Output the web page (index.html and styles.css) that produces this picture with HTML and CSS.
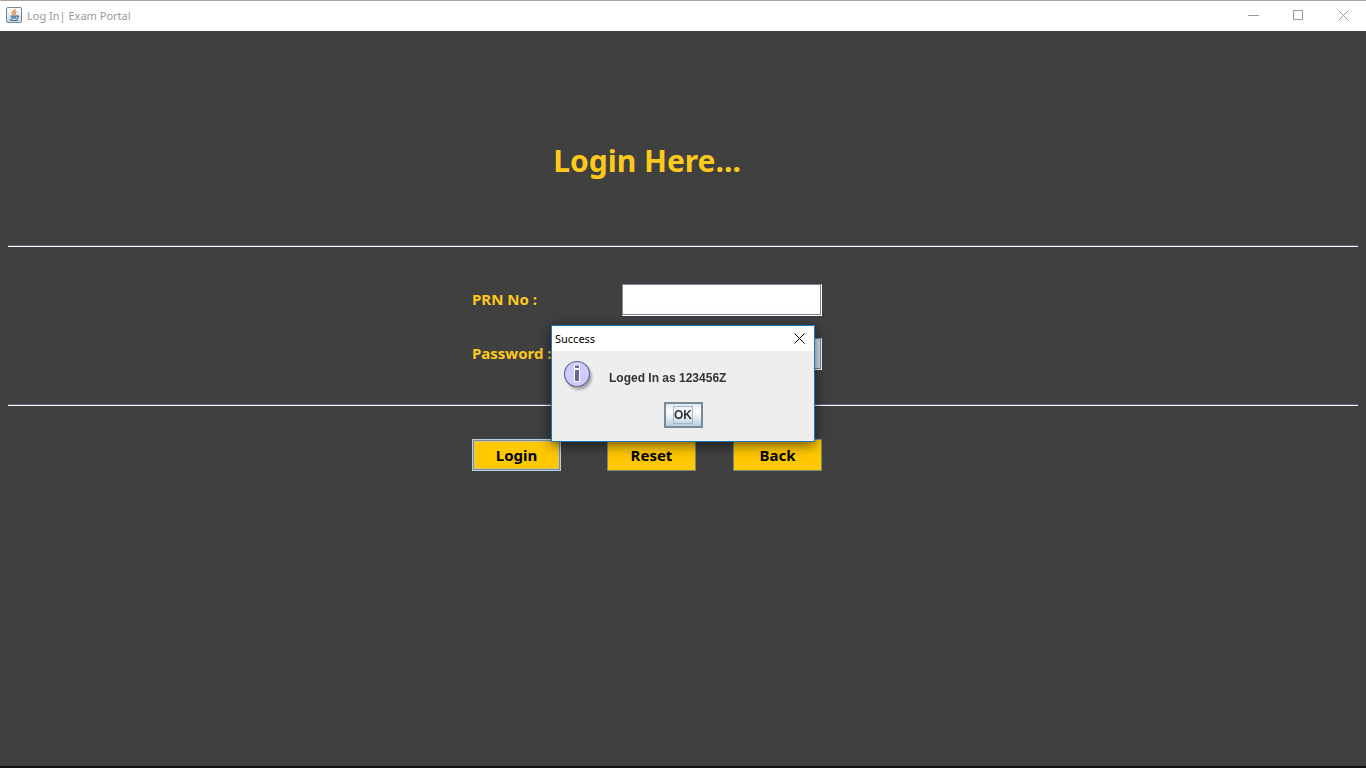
FILE: index.html
```
<!DOCTYPE html>
<html lang="en">
<head>
<meta charset="utf-8">
<title>Log In| Exam Portal</title>
<link rel="stylesheet" href="styles.css">
</head>
<body>
<div class="window">
  <header class="titlebar">
    <svg class="app-icon" width="16" height="16" viewBox="0 0 16 16" aria-hidden="true">
      <defs><linearGradient id="tile" x1="0" y1="0" x2="0" y2="1"><stop offset="0" stop-color="#fff"/><stop offset="1" stop-color="#ccd8e2"/></linearGradient></defs>
      <rect x=".5" y=".5" width="15" height="15" rx="1.5" fill="url(#tile)" stroke="#71899e"/>
      <path d="M9 2C9.500 4 5.200 4.800 6.500 6.500L7.500 8M10.500 4.500C7.500 5.500 9.800 6.500 8.300 8" fill="none" stroke="#e08a30" stroke-width="1.500"/>
      <path d="M4.500 9.200H10.500M5 10.800H10M10.500 9C13.500 8.500 12.500 11 10.500 11.300M3.500 12.500C5 13.800 10 13.800 12 12.700" fill="none" stroke="#3f6a8c" stroke-width="1.200"/>
    </svg>
    <span class="caption">Log In| Exam Portal</span>
    <div class="controls">
      <button class="control" aria-label="Minimize"><svg width="11" height="11" viewBox="0 0 11 11"><path d="M0 5.500H11"/></svg></button>
      <button class="control" aria-label="Maximize"><svg width="11" height="11" viewBox="0 0 11 11"><path d="M.5.5h9v9H.5z"/></svg></button>
      <button class="control" aria-label="Close"><svg width="11" height="11" viewBox="0 0 11 11"><path d="M.5.5l10 10M10.500.5l-10 10"/></svg></button>
    </div>
  </header>
  <main class="portal">
    <h1 class="heading">Login Here...</h1>
    <form class="login">
      <div class="fields">
        <div class="row"><label for="prn">PRN No :</label><input class="field" id="prn" type="text"></div>
        <div class="row"><label for="password">Password :</label><input class="field selected" id="password" type="password"></div>
      </div>
      <div class="actions">
        <button class="action focused" type="button">Login</button>
        <button class="action" type="button">Reset</button>
        <button class="action" type="button">Back</button>
      </div>
    </form>
  </main>
  <footer class="edge"></footer>
</div>
<div class="overlay">
  <section class="dialog" role="dialog" aria-labelledby="dialog-title">
    <header class="dialog-bar">
      <span id="dialog-title">Success</span>
      <button class="dialog-close" aria-label="Close"><svg width="11" height="11" viewBox="0 0 11 11"><path d="M.5.5l10 10M10.500.5l-10 10"/></svg></button>
    </header>
    <div class="dialog-body">
      <div class="message">
        <svg class="info" width="32" height="32" viewBox="0 0 32 32" aria-hidden="true">
          <defs><filter id="soft"><feGaussianBlur stdDeviation="1.200"/></filter></defs>
          <circle cx="16" cy="17" r="13" fill="#aaa" filter="url(#soft)"/>
          <circle cx="14" cy="14" r="12.500" fill="#ccccff" stroke="#666699" stroke-width="1.200"/>
          <path d="M11 4.500h6v4.500h-6zM11 8.500h6v13.500h-6z" fill="#fff"/>
          <path d="M12 5.500h4V8h-4zM12 10h4v11h-4z" fill="#666699"/>
        </svg>
        <p>Loged In as 123456Z</p>
      </div>
      <button class="ok"><span>OK</span></button>
    </div>
  </section>
</div>
</body>
</html>
```
FILE: styles.css
```
* { box-sizing: border-box; }
body { margin: 0; background: #404040; }
button { padding: 0; border: 0; border-radius: 0; background: none; }

.window { display: flex; flex-direction: column; min-height: 100vh; }
.titlebar {
  display: flex; align-items: center; height: 31px; padding-left: 6px;
  border-top: 1px solid #a5a5a5; background: #fff; color: #999;
  font: 11px/16px "Noto Sans", sans-serif;
}
.app-icon { margin-bottom: 2px; }
.caption { margin-left: 5px; }
.controls { display: flex; margin-left: auto; }
.control { display: grid; place-items: center; width: 45px; height: 29px; padding-bottom: 2px; }
.control svg { fill: none; stroke: #999; }

.portal { flex: 1; padding: 0 8px; color: #ffc91c; }
.heading {
  margin: 0; padding: 110px 72px 0 0; height: 214px; text-align: center;
  font: bold 30px/40px "Noto Sans", sans-serif;
}
.login { font: bold 15px/20px "Noto Sans", sans-serif; }
.fields {
  display: flex; flex-direction: column; align-items: center; gap: 22px;
  height: 161px; padding: 38px 72px 0 0;
  border-top: 1px solid #596580; border-bottom: 1px solid #fff;
  box-shadow: inset 0 1px #fff, inset 0 -1px #596580;
}
.row { display: flex; align-items: center; justify-content: space-between; width: 350px; height: 32px; }
.row label { padding-bottom: 2px; }
.field {
  width: 200px; height: 32px; padding: 2px 4px; font: inherit;
  border: 1px solid #fff; border-top-color: #7a8a99; border-left-color: #7a8a99;
  background: #fff; box-shadow: inset -1px -1px #7a8a99; outline: 0;
}
.field.selected { background: #d8e3ec; }
.actions { display: flex; justify-content: center; gap: 37px; padding: 33px 72px 0 0; }
.action {
  width: 89px; height: 32px; border: 1px solid #7a8a70;
  background: #ffc800; color: #000; font: inherit;
}
.action.focused { margin-right: 9px; border-color: #b8cfe5; box-shadow: inset 0 0 0 1px #7a8a99, inset 0 0 0 2px #d8c77a; }
.edge { height: 2px; background: #151515; }

.overlay { position: fixed; inset: 0; display: grid; place-items: center; padding-bottom: 1px; }
.dialog {
  width: 264px; border: 1px solid #1878b8; background: #eee;
  box-shadow: 0 3px 12px #0009;
}
.dialog-bar {
  display: flex; align-items: center; justify-content: space-between; height: 25px;
  padding: 0 9px 0 3px; background: #fff; color: #000;
  font: 11px/16px "Noto Sans", sans-serif;
}
.dialog-close { display: grid; place-items: center; height: 24px; width: 12px; }
.dialog-close svg { fill: none; stroke: #000; }
.dialog-body { display: flex; flex-direction: column; align-items: center; padding: 9px 11px 13px; }
.message { display: flex; align-self: stretch; gap: 14px; height: 42px; }
.message p { margin: 10px 0 0; color: #333; font: bold 12px/16px "Liberation Sans", Arial, sans-serif; }
.ok {
  width: 39px; height: 26px; border: 2px solid #7a8a99;
  background: linear-gradient(#dfe9f1, #fff 35%, #b8cfe5);
  color: #333; font: bold 12px/16px "Liberation Sans", Arial, sans-serif;
}
.ok span { display: inline-block; border: 1px solid #a3b8cc; }
```
